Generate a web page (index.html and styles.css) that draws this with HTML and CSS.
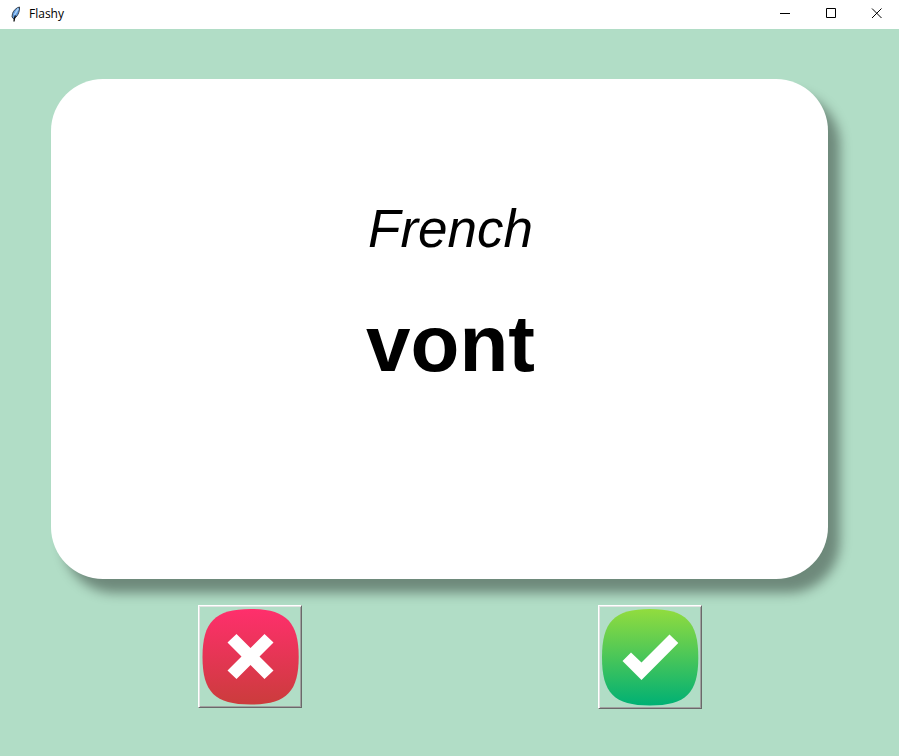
FILE: index.html
```html
<!DOCTYPE html>
<html lang="en">
<head>
<meta charset="utf-8">
<title>Flashy</title>
<link rel="stylesheet" href="styles.css">
</head>
<body>
<header class="titlebar">
  <svg class="feather" width="16" height="16" viewBox="0 0 16 16" aria-hidden="true">
    <path d="M11.500 1C8.500 1.500 5.500 4.500 4.500 7.500L4 11 5.800 13C9 11 11.800 6.500 11.500 1Z" fill="#5f9be0" stroke="#39424d" stroke-width="1"/>
    <path d="M10.300 2.500Q8 6 6.400 9" fill="none" stroke="#a9d0f5" stroke-width="1.500"/>
    <path d="M7.500 9.500Q6.300 11.500 6 15.500" fill="none" stroke="#111" stroke-width="1.400"/>
  </svg>
  <h1 class="title">Flashy</h1>
  <div class="controls">
    <button class="control" aria-label="Minimize"><svg width="12" height="11" viewBox="0 0 12 11"><path d="M2 5.500H12"/></svg></button>
    <button class="control" aria-label="Maximize"><svg width="12" height="11" viewBox="0 0 12 11"><path d="M2.500.500H11.500V9.500H2.500Z"/></svg></button>
    <button class="control" aria-label="Close"><svg width="12" height="11" viewBox="0 0 12 11"><path d="M2 .5L11.500 10M11.500 .5L2 10"/></svg></button>
  </div>
</header>
<main class="board">
  <section class="card">
    <p class="language">French</p>
    <p class="word">vont</p>
  </section>
  <div class="answers">
    <button class="answer" aria-label="Unknown">
      <svg width="100" height="99" viewBox="0 0 100 99">
        <defs><linearGradient id="red" x1="0" y1="0" x2="0" y2="1"><stop offset="0" stop-color="#ff2f6c"/><stop offset="1" stop-color="#cb3c3c"/></linearGradient></defs>
        <path d="M50.500 2C86 2 98.700 15 98.700 50S86 97.500 50.500 97.500 2.500 85 2.500 50 15 2 50.500 2Z" fill="url(#red)"/>
        <path d="M36.500 27L50.500 41 64.500 27 73.500 35.500 59.500 49.500 73.500 63.500 64.500 72 50.500 58 36.500 72 27.500 63.500 41.500 49.500 27.500 35.500Z" fill="#fff"/>
      </svg>
    </button>
    <button class="answer" aria-label="Known">
      <svg width="100" height="100" viewBox="0 0 100 100">
        <defs><linearGradient id="green" x1="0" y1="0" x2="0" y2="1"><stop offset="0" stop-color="#92dc3e"/><stop offset="1" stop-color="#00b074"/></linearGradient></defs>
        <path d="M50 2C86 2 98.300 15 98.300 50.500S86 98.500 50 98.500 2 86 2 50.500 14 2 50 2Z" fill="url(#green)"/>
        <path d="M31 45.500L41.500 55.500 69.500 27.500 78.300 36 41.500 73 22.500 54Z" fill="#fff"/>
      </svg>
    </button>
  </div>
</main>
</body>
</html>
```
FILE: styles.css
```css
* {
  box-sizing: border-box;
}

body {
  display: flex;
  flex-direction: column;
  min-height: 100vh;
  margin: 0;
  background: #b1ddc6;
  color: #000;
  font-family: "Liberation Sans", Arial, sans-serif;
}

.titlebar {
  display: flex;
  align-items: center;
  height: 29px;
  padding-left: 8px;
  background: #fff;
}

.title {
  flex: 1;
  margin: 0 0 0 5px;
  font: 12px/26px "Open Sans", "Segoe UI", sans-serif;
}

.titlebar > * {
  margin-bottom: 2px;
}

.controls {
  display: flex;
}

.control {
  display: grid;
  place-items: center;
  width: 46px;
  height: 27px;
  padding: 0;
  border: 0;
  background: none;
}

.control svg {
  fill: none;
  stroke: #000;
  stroke-width: 1px;
}

.board {
  flex: 1;
  padding: 50px 49px 0 50px;
}

.card {
  height: 500px;
  margin: 0 22px 0 1px;
  padding-top: 120px;
  border-radius: 52px;
  background: #fff;
  box-shadow: 12px 14px 12px rgba(0, 0, 0, 0.38);
  text-align: center;
}

.language {
  margin: 0 0 40px;
  padding-left: 22px;
  font-size: 53px;
  font-style: italic;
  line-height: 60px;
}

.word {
  margin: 0;
  padding-left: 22px;
  font-size: 80px;
  font-weight: bold;
  line-height: 90px;
}

.answers {
  display: grid;
  grid-template-columns: 1fr 1fr;
  place-items: start center;
  padding-top: 26px;
}

.answer {
  padding: 1px;
  border: 1px solid;
  border-color: #fff #696969 #696969 #fff;
  background: none;
  box-shadow: inset 1px 1px #e3e3e3, inset -1px -1px #a0a0a0;
}

.answer svg {
  display: block;
}
```
